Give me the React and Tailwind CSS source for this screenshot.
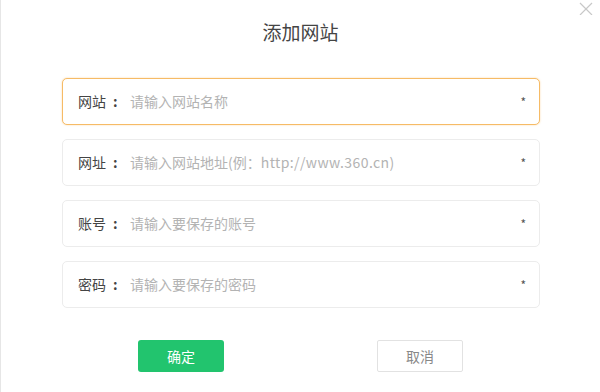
import React from "react";

const fields = [
  { label: "网站", placeholder: "请输入网站名称", active: true },
  {
    label: "网址",
    placeholder: (
      <>
        请输入网站地址(例：<span className="tracking-[0.4px]">http://www.360.cn)</span>
      </>
    ),
  },
  { label: "账号", placeholder: "请输入要保存的账号" },
  { label: "密码", placeholder: "请输入要保存的密码" },
];

const Field = ({ label, placeholder, active }) => (
  <div
    className={`flex h-[47px] items-center rounded-[5px] border bg-white pl-[15px] pr-[13px] ${
      active ? "border-[#f6bb66] shadow-[0_0_2px_rgba(246,187,102,0.6)]" : "border-[#ececec]"
    }`}
  >
    <span className="w-[52px] shrink-0 text-[14px] text-[#444]">
      {label}
      <span className="ml-[7px] font-bold">:</span>
    </span>
    <span className="flex-1 text-[14px] text-[#b3b3b3]">{placeholder}</span>
    <span className="text-[12px] text-[#555]">*</span>
  </div>
);

export default function App() {
  return (
    <div
      className="relative h-[392px] w-[600px] overflow-hidden border-l border-[#e6e6e6] bg-white"
      style={{ fontFamily: '"Noto Sans CJK SC", "Noto Sans", sans-serif' }}
    >
      <button className="absolute right-[7px] top-[1px] text-[#c8c8c8]">
        <svg width="14" height="14" viewBox="0 0 14 14" fill="none" stroke="currentColor" strokeWidth="1.2">
          <path d="M1 2 L13 14 M13 2 L1 14" />
        </svg>
      </button>

      <h1 className="pt-[17px] text-center text-[19px] leading-[30px] text-[#444]">添加网站</h1>

      <div className="ml-[61px] mt-[31px] flex w-[478px] flex-col gap-[14px]">
        {fields.map((f) => (
          <Field key={f.label} {...f} />
        ))}
      </div>

      <div className="ml-[137px] mt-[32px] flex gap-[153px]">
        <button className="h-[32px] w-[86px] rounded-[3px] bg-[#22c46e] text-[14px] text-white">确定</button>
        <button className="h-[32px] w-[86px] rounded-[2px] border border-[#e2e2e2] bg-white text-[14px] text-[#888]">
          取消
        </button>
      </div>
    </div>
  );
}
